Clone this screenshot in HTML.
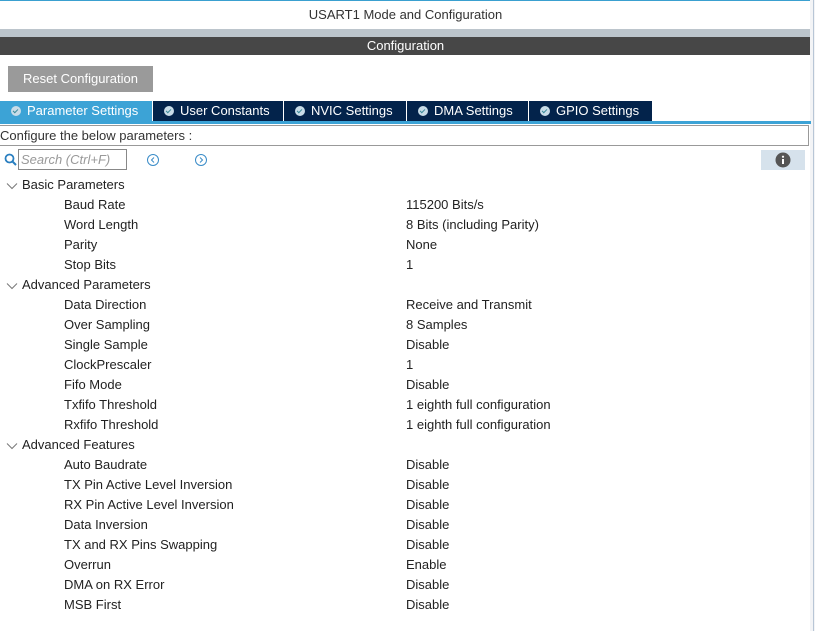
<!DOCTYPE html>
<html><head><style>
body{margin:0;width:815px;height:631px;overflow:hidden;background:#fff;font-family:"Liberation Sans",sans-serif;font-size:13px;color:#222;position:relative}
.a{position:absolute;white-space:nowrap}
.tab{position:absolute;top:101px;height:20px;background:#03234b;color:#fff;line-height:20px;font-size:13px;border-right:1px solid #fff;box-sizing:border-box}
.tab i{display:inline-block;width:10px;height:10px;border-radius:50%;background:#c8dce8;vertical-align:-1px;margin:0 6px 0 11px;position:relative}
.tab i:after{content:"";position:absolute;left:3px;top:2px;width:2px;height:4px;border:solid #3a8a9a;border-width:0 1.5px 1.5px 0;transform:rotate(45deg)}
.row{position:absolute;left:0;height:20px;line-height:20px;width:800px}
.row span{position:absolute}
.row svg{position:absolute;left:6px;top:7px}
</style></head><body>
<div class="a" style="left:0;top:0;width:815px;height:1px;background:#3aa0d0"></div>
<div class="a" style="left:0;top:1px;width:811px;height:28px;line-height:28px;text-align:center;font-size:13px;color:#333">USART1 Mode and Configuration</div>
<div class="a" style="left:0;top:29px;width:811px;height:8px;background:#bcc5cc"></div>
<div class="a" style="left:0;top:37px;width:811px;height:18px;background:#474747;color:#fff;text-align:center;line-height:18px;font-size:13px">Configuration</div>
<div class="a" style="left:810px;top:0;width:5px;height:631px;background:#f3f4f6"></div>
<div class="a" style="left:813px;top:0;width:1px;height:631px;background:#b8c6d6"></div>
<div class="a" style="left:8px;top:66px;width:145px;height:26px;background:#9a9a9a;color:#fff;text-align:center;line-height:26px;font-size:13px">Reset Configuration</div>
<div class="tab" style="left:0;width:153px;background:#3ca3d6"><i></i>Parameter Settings</div>
<div class="tab" style="left:153px;width:131px"><i></i>User Constants</div>
<div class="tab" style="left:284px;width:123px"><i></i>NVIC Settings</div>
<div class="tab" style="left:407px;width:122px"><i></i>DMA Settings</div>
<div class="tab" style="left:529px;width:124px"><i></i>GPIO Settings</div>
<div class="a" style="left:0;top:121px;width:811px;height:3px;background:#3ca3d6"></div>
<div class="a" style="left:0;top:125px;width:808px;height:19px;border:1px solid #999;border-left:none;line-height:19px;color:#333">Configure the below parameters :</div>
<svg class="a" style="left:4px;top:153px" width="14" height="14"><circle cx="5.5" cy="5.5" r="4" fill="none" stroke="#2a7fc0" stroke-width="1.8"/><line x1="8.5" y1="8.5" x2="12" y2="12" stroke="#2a7fc0" stroke-width="2"/></svg>
<div class="a" style="left:18px;top:149px;width:109px;height:21px;border:1px solid #888;box-sizing:border-box;color:#999;font-style:italic;line-height:19px;padding-left:2px">Search (Ctrl+F)</div>
<svg class="a" style="left:146px;top:153px" width="14" height="14"><circle cx="7" cy="7" r="5.5" fill="none" stroke="#3a8cc8"/><path d="M8 4.5L5.5 7L8 9.5" fill="none" stroke="#3a8cc8"/></svg>
<svg class="a" style="left:194px;top:153px" width="14" height="14"><circle cx="7" cy="7" r="5.5" fill="none" stroke="#3a8cc8"/><path d="M6 4.5L8.5 7L6 9.5" fill="none" stroke="#3a8cc8"/></svg>
<div class="a" style="left:761px;top:150px;width:44px;height:20px;background:#d6e2ec"></div>
<svg class="a" style="left:775px;top:152px" width="16" height="16"><circle cx="8" cy="8" r="7.5" fill="#555"/><rect x="7" y="7" width="2" height="5" fill="#fff"/><circle cx="8" cy="4.7" r="1.1" fill="#fff"/></svg>
<div style="position:absolute;left:0;top:175px">
<div class="row" style="top:0"><svg width="12" height="8"><path d="M1 1.5L6 6.5L11 1.5" fill="none" stroke="#777"/></svg><span style="left:22px">Basic Parameters</span></div>
<div class="row" style="top:20px"><span style="left:64px">Baud Rate</span><span style="left:406px">115200 Bits/s</span></div>
<div class="row" style="top:40px"><span style="left:64px">Word Length</span><span style="left:406px">8 Bits (including Parity)</span></div>
<div class="row" style="top:60px"><span style="left:64px">Parity</span><span style="left:406px">None</span></div>
<div class="row" style="top:80px"><span style="left:64px">Stop Bits</span><span style="left:406px">1</span></div>
<div class="row" style="top:100px"><svg width="12" height="8"><path d="M1 1.5L6 6.5L11 1.5" fill="none" stroke="#777"/></svg><span style="left:22px">Advanced Parameters</span></div>
<div class="row" style="top:120px"><span style="left:64px">Data Direction</span><span style="left:406px">Receive and Transmit</span></div>
<div class="row" style="top:140px"><span style="left:64px">Over Sampling</span><span style="left:406px">8 Samples</span></div>
<div class="row" style="top:160px"><span style="left:64px">Single Sample</span><span style="left:406px">Disable</span></div>
<div class="row" style="top:180px"><span style="left:64px">ClockPrescaler</span><span style="left:406px">1</span></div>
<div class="row" style="top:200px"><span style="left:64px">Fifo Mode</span><span style="left:406px">Disable</span></div>
<div class="row" style="top:220px"><span style="left:64px">Txfifo Threshold</span><span style="left:406px">1 eighth full configuration</span></div>
<div class="row" style="top:240px"><span style="left:64px">Rxfifo Threshold</span><span style="left:406px">1 eighth full configuration</span></div>
<div class="row" style="top:260px"><svg width="12" height="8"><path d="M1 1.5L6 6.5L11 1.5" fill="none" stroke="#777"/></svg><span style="left:22px">Advanced Features</span></div>
<div class="row" style="top:280px"><span style="left:64px">Auto Baudrate</span><span style="left:406px">Disable</span></div>
<div class="row" style="top:300px"><span style="left:64px">TX Pin Active Level Inversion</span><span style="left:406px">Disable</span></div>
<div class="row" style="top:320px"><span style="left:64px">RX Pin Active Level Inversion</span><span style="left:406px">Disable</span></div>
<div class="row" style="top:340px"><span style="left:64px">Data Inversion</span><span style="left:406px">Disable</span></div>
<div class="row" style="top:360px"><span style="left:64px">TX and RX Pins Swapping</span><span style="left:406px">Disable</span></div>
<div class="row" style="top:380px"><span style="left:64px">Overrun</span><span style="left:406px">Enable</span></div>
<div class="row" style="top:400px"><span style="left:64px">DMA on RX Error</span><span style="left:406px">Disable</span></div>
<div class="row" style="top:420px"><span style="left:64px">MSB First</span><span style="left:406px">Disable</span></div>
</div>
</body></html>
